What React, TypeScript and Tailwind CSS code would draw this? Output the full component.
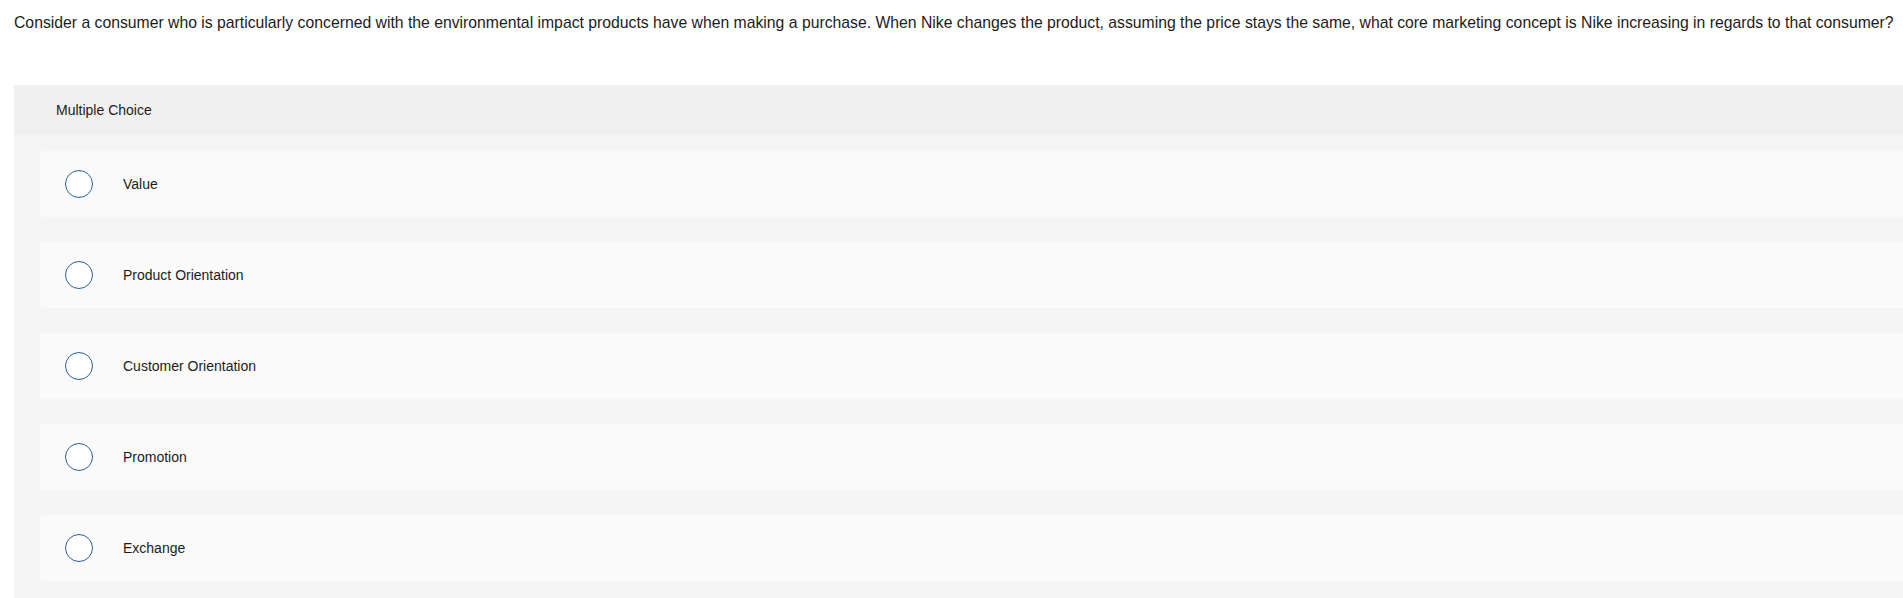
import { useState } from "react";

const options = ["Value", "Product Orientation", "Customer Orientation", "Promotion", "Exchange"];

export default function App() {
    const [picked, setPicked] = useState<number | null>(null);

    return (
        <div className="min-h-screen bg-white overflow-hidden font-['Liberation_Sans',Arial,sans-serif] text-[#1c1c1c]">
            <p className="pl-[14px] pt-[13px] text-[15.75px] leading-[20px] whitespace-nowrap">
                Consider a consumer who is particularly concerned with the environmental impact products have when making a purchase. When Nike changes the product, assuming the price stays the same, what core marketing concept is Nike increasing in regards to that consumer?
            </p>

            <div className="ml-[14px] mr-[-20px] mt-[52px] bg-[#f5f5f5]">
                <div className="h-[50px] bg-[#f0f0f0] pl-[42px] flex items-center text-[14px] text-[#1c1c1c]">
                    Multiple Choice
                </div>
                <div className="pl-[26px] pt-[16px] pb-[20px] flex flex-col gap-[25px]">
                    {options.map((label, i) => (
                        <button
                            key={label}
                            onClick={() => setPicked(i)}
                            className="h-[66px] bg-[#fafafa] rounded-[3px] flex items-center text-left cursor-pointer"
                        >
                            <span className="ml-[25px] w-[28px] h-[28px] rounded-full border-[1.5px] border-[#27609c] bg-white flex items-center justify-center shrink-0">
                                {picked === i && <span className="w-[14px] h-[14px] rounded-full bg-[#27609c]" />}
                            </span>
                            <span className="ml-[30px] text-[14px] text-[#1c1c1c]">{label}</span>
                        </button>
                    ))}
                </div>
            </div>
        </div>
    );
}
